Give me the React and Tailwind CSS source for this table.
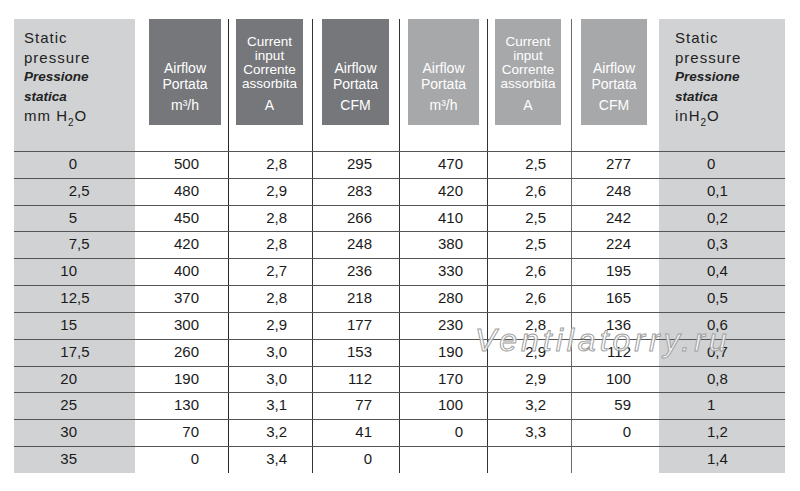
import React from "react";

const rows = [
  ["0", "500", "2,8", "295", "470", "2,5", "277", "0"],
  ["2,5", "480", "2,9", "283", "420", "2,6", "248", "0,1"],
  ["5", "450", "2,8", "266", "410", "2,5", "242", "0,2"],
  ["7,5", "420", "2,8", "248", "380", "2,5", "224", "0,3"],
  ["10", "400", "2,7", "236", "330", "2,6", "195", "0,4"],
  ["12,5", "370", "2,8", "218", "280", "2,6", "165", "0,5"],
  ["15", "300", "2,9", "177", "230", "2,8", "136", "0,6"],
  ["17,5", "260", "3,0", "153", "190", "2,9", "112", "0,7"],
  ["20", "190", "3,0", "112", "170", "2,9", "100", "0,8"],
  ["25", "130", "3,1", "77", "100", "3,2", "59", "1"],
  ["30", "70", "3,2", "41", "0", "3,3", "0", "1,2"],
  ["35", "0", "3,4", "0", "", "", "", "1,4"],
];

const grid =
  "grid grid-cols-[121px_93px_84px_87px_88px_84px_88px_126px]";

function AirBox({ bg, unit, w }) {
  return (
    <div
      className={`${bg} ${w} h-[106px] flex flex-col items-center justify-end pb-[12px] text-white text-[14px]`}
    >
      <div className="leading-[16px]">Airflow</div>
      <div className="leading-[16px]">Portata</div>
      <div className="leading-[16px] mt-[5px]">{unit}</div>
    </div>
  );
}

function CurBox({ bg, w }) {
  return (
    <div
      className={`${bg} ${w} h-[106px] flex flex-col items-center justify-end pb-[12px] text-white`}
    >
      <div className="text-[13.5px] leading-[14px]">Current</div>
      <div className="text-[13.5px] leading-[14px]">input</div>
      <div className="text-[13.5px] leading-[14px]">Corrente</div>
      <div className="text-[13.5px] leading-[14px]">assorbita</div>
      <div className="text-[14px] leading-[16px] mt-[6px]">A</div>
    </div>
  );
}

function PressureHead({ unit, pl }) {
  return (
    <div className={`bg-[#d1d2d4] ${pl} pt-[9px] text-[#222]`}>
      <div className="text-[15px] leading-[19.5px] tracking-[1px]">Static</div>
      <div className="text-[15px] leading-[19.5px] tracking-[1px]">pressure</div>
      <div className="text-[13.5px] leading-[19.5px] font-bold italic">Pressione</div>
      <div className="text-[13.5px] leading-[19.5px] font-bold italic">statica</div>
      <div className="text-[15px] leading-[19.5px] tracking-[1px]">{unit}</div>
    </div>
  );
}

const pad = ["", "pr-[29px]", "pr-[25px]", "pr-[27px]", "pr-[24px]", "pr-[25px]", "pr-[28px]"];
const vline = [
  "",
  "",
  "border-l border-[#2a2a2a]",
  "border-l border-[#333]",
  "border-l border-[#333]",
  "border-l border-[#333]",
  "border-l border-[#6a6a6a]",
  "",
];

export default function App() {
  return (
    <div className="relative w-[800px] h-[491px] bg-white pl-[14px] pt-[19px] [font-family:'Liberation_Sans',Arial,sans-serif] overflow-hidden">
      <div className="w-[771px]">
        <div className={`${grid} h-[132px]`}>
          <PressureHead
            pl="pl-[10px]"
            unit={
              <span>
                mm H<sub className="text-[10px] -bottom-[0.45em]">2</sub>O
              </span>
            }
          />
          <div className="pl-[14px]">
            <AirBox bg="bg-[#76777b]" w="w-[72px]" unit={<span>m³/h</span>} />
          </div>
          <div className={`${vline[2]} pl-[7px]`}>
            <CurBox bg="bg-[#76777b]" w="w-[67px]" />
          </div>
          <div className={`${vline[3]} pl-[9px]`}>
            <AirBox bg="bg-[#76777b]" w="w-[67px]" unit="CFM" />
          </div>
          <div className={`${vline[4]} pl-[8px]`}>
            <AirBox bg="bg-[#a7a8aa]" w="w-[71px]" unit={<span>m³/h</span>} />
          </div>
          <div className={`${vline[5]} pl-[7px]`}>
            <CurBox bg="bg-[#a7a8aa]" w="w-[66px]" />
          </div>
          <div className={`${vline[6]} pl-[9px]`}>
            <AirBox bg="bg-[#a7a8aa]" w="w-[66px]" unit="CFM" />
          </div>
          <PressureHead
            pl="pl-[16px]"
            unit={
              <span>
                inH<sub className="text-[10px] -bottom-[0.45em]">2</sub>O
              </span>
            }
          />
        </div>
        {rows.map((r, i) => {
          const [intPart, decPart] = r[0].split(",");
          return (
            <div
              key={i}
              className={`${grid} h-[26.83px] border-t border-[#555] text-[15px] leading-[24px] text-[#1a1a1a]`}
            >
              <div className="bg-[#d1d2d4] whitespace-nowrap">
                <span className="inline-block w-[63px] text-right">{intPart}</span>
                {decPart !== undefined ? <span>,{decPart}</span> : null}
              </div>
              {r.slice(1, 7).map((v, j) => (
                <div key={j} className={`${vline[j + 1]} ${pad[j + 1]} text-right`}>
                  {v}
                </div>
              ))}
              <div className="bg-[#d1d2d4] pl-[48px]">{r[7]}</div>
            </div>
          );
        })}
      </div>
      <div className="absolute left-[475px] top-[325px] text-[32px] leading-[31px] italic tracking-[4px] text-[rgba(255,255,255,0.8)] [-webkit-text-stroke:1px_#a0a0a0] whitespace-nowrap">
        Ventilatorry.ru
      </div>
    </div>
  );
}
